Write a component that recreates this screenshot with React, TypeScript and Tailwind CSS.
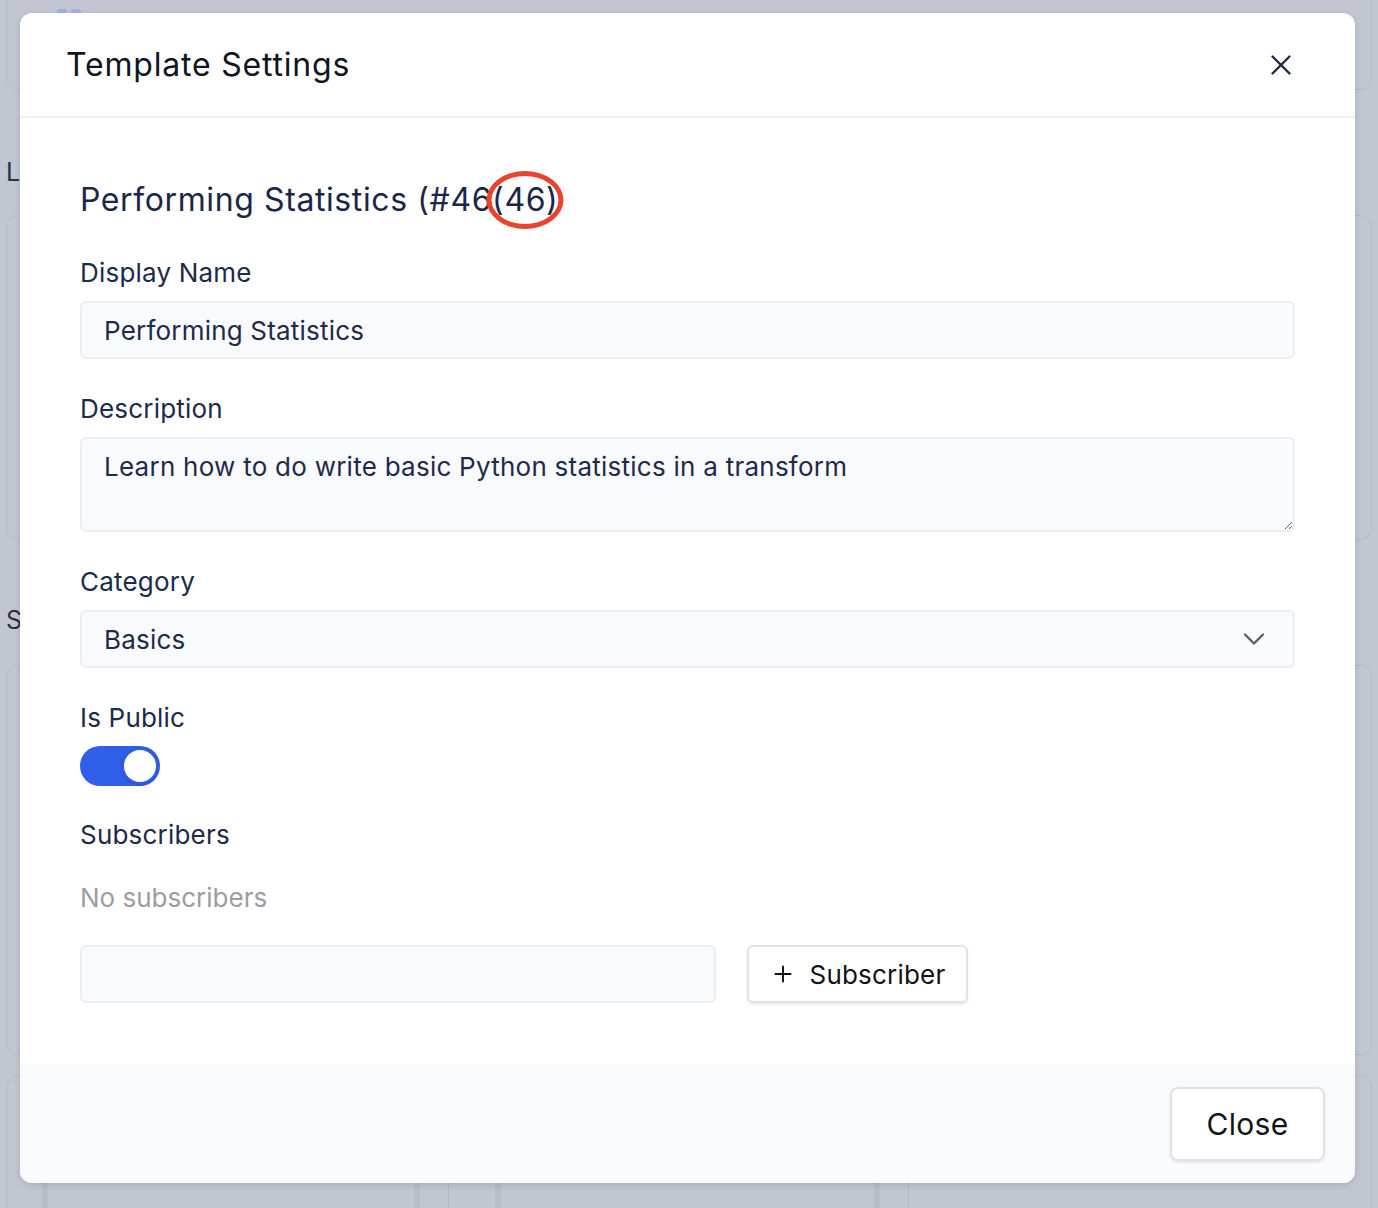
import { ChevronDown, Plus, X } from "lucide-react";

const font = { fontFamily: "Inter, 'Noto Sans', sans-serif" };

// Page lying under the modal, seen through the overlay
const BackgroundPage = () => (
  <div className="h-[1208px] bg-[#c2c6d0] px-[6px] overflow-hidden">
    <div className="-mt-[20px] h-[110px] rounded-xl border border-[#b6bac5] relative">
      <div className="absolute left-[50px] top-[28px] flex gap-[4px]">
        <span className="w-[10px] h-[5px] rounded-full bg-[#9fb1e6]" />
        <span className="w-[10px] h-[5px] rounded-full bg-[#9fb1e6]" />
      </div>
    </div>
    <div className="mt-[64px] text-[25px] leading-[36px] text-[#2a3243]">L</div>
    <div className="mt-[25px] h-[325px] rounded-xl border border-[#b6bac5]" />
    <div className="mt-[62px] text-[25px] leading-[36px] text-[#2a3243]">S</div>
    <div className="mt-[27px] h-[390px] rounded-xl border border-[#b6bac5]" />
    <div className="mt-[20px] h-[200px] rounded-xl border border-[#b6bac5] flex pl-[35px] pt-[14px]">
      <div className="w-[378px] rounded-lg border-x-[6px] border-[#b9bdc8]" />
      <div className="ml-[28px] w-[1px] bg-[#b3b7c2]" />
      <div className="ml-[46px] w-[385px] rounded-lg border-x-[6px] border-[#b9bdc8]" />
      <div className="ml-[28px] w-[420px] rounded-lg border-l border-[#b3b7c2]" />
    </div>
  </div>
);

const Label = ({ children }: { children: string }) => (
  <div className="text-[26px] leading-[36px] text-[#1c2a4b] tracking-[0.2px]">{children}</div>
);

export default function App() {
  return (
    <div className="relative" style={font}>
      <BackgroundPage />

      <div className="absolute left-[20px] top-[13px] w-[1335px] bg-white rounded-[12px] shadow-[0_2px_6px_rgba(30,40,70,0.15)] overflow-hidden">
        <div className="h-[105px] flex items-center justify-between pl-[46px] pr-[57px] border-b-2 border-[#eef0f4]">
          <h2 className="text-[32px] leading-[40px] text-[#101522] tracking-[0.8px]">Template Settings</h2>
          <X size={34} strokeWidth={1.7} className="text-[#1f2a44]" />
        </div>

        <div className="px-[60px] pt-[62px] pb-[61px]">
          <h3 className="text-[32px] leading-[40px] text-[#1b2747] tracking-[0.6px]">
            Performing Statistics (#46
            <span className="relative">
              (46)
              <span className="absolute left-1/2 top-1/2 -translate-x-1/2 -translate-y-1/2 w-[77px] h-[58px] rounded-[50%] border-[5px] border-[#e8432d]" />
            </span>
          </h3>

          <div className="mt-[35px]">
            <Label>Display Name</Label>
            <div className="mt-[10px] h-[58px] rounded-md border-2 border-[#eceef2] bg-[#f9fafd] flex items-center px-[22px] text-[26px] text-[#1e2a4a] tracking-[0.2px]">
              Performing Statistics
            </div>
          </div>

          <div className="mt-[32px]">
            <Label>Description</Label>
            <textarea
              className="mt-[10px] block w-full h-[95px] rounded-md border-2 border-[#eceef2] bg-[#f9fafd] px-[22px] py-[10px] text-[26px] leading-[36px] text-[#1e2a4a] tracking-[0.25px] outline-none"
              defaultValue="Learn how to do write basic Python statistics in a transform"
            />
          </div>

          <div className="mt-[32px]">
            <Label>Category</Label>
            <div className="mt-[10px] h-[58px] rounded-md border-2 border-[#eceef2] bg-[#f9fafd] flex items-center justify-between pl-[22px] pr-[21px] text-[26px] text-[#1e2a4a] tracking-[0.2px]">
              <span>Basics</span>
              <ChevronDown size={36} strokeWidth={1.5} className="text-[#525c70]" />
            </div>
          </div>

          <div className="mt-[32px]">
            <Label>Is Public</Label>
            <div className="mt-[10px] w-[80px] h-[40px] rounded-full bg-[#2f5fe9] flex items-center justify-end p-[2px]">
              <span className="w-[36px] h-[36px] rounded-full bg-white border-2 border-[#2f5fe9] shadow-[0_1px_3px_rgba(0,0,0,0.2)]" />
            </div>
          </div>

          <div className="mt-[31px]">
            <Label>Subscribers</Label>
            <div className="mt-[27px] text-[26px] leading-[36px] text-[#9b9da4]">No subscribers</div>
            <div className="mt-[29px] flex gap-[31px]">
              <div className="w-[636px] h-[58px] rounded-md border-2 border-[#eceef2] bg-[#f9fafd]" />
              <button className="w-[221px] h-[58px] rounded-md border-2 border-[#e0e2e8] bg-white shadow-[0_2px_3px_rgba(0,0,0,0.08)] flex items-center justify-center gap-[14px] text-[26px] text-[#111318] tracking-[0.2px]">
                <Plus size={26} strokeWidth={1.8} />
                <span>Subscriber</span>
              </button>
            </div>
          </div>
        </div>

        <div className="h-[119px] bg-[#f9fafc] flex items-start justify-end pt-[23px] pr-[30px]">
          <button className="w-[155px] h-[74px] rounded-lg border-2 border-[#e0e2e8] bg-white shadow-[0_2px_3px_rgba(0,0,0,0.08)] text-[30px] text-[#111318] tracking-[0.3px]">
            Close
          </button>
        </div>
      </div>
    </div>
  );
}
